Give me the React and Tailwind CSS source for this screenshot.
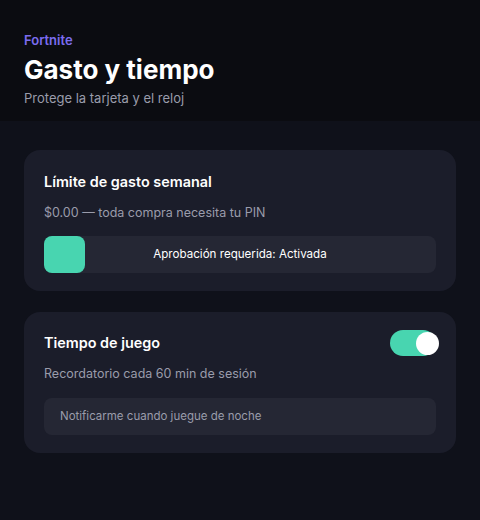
export default function App() {
  return (
    <div className="min-h-[520px] w-[480px] bg-[#0f111a] font-['Inter','Liberation_Sans',sans-serif]">
      <header className="bg-[#0b0c11] px-6 pt-[30px] pb-[13px]">
        <p className="text-[13px] leading-5 font-semibold text-[#7b6cf0]">Fortnite</p>
        <h1 className="mt-1 text-[26px] leading-8 font-bold text-white">Gasto y tiempo</h1>
        <p className="mt-0.5 text-[13px] leading-5 text-[#9a9cab]">Protege la tarjeta y el reloj</p>
      </header>

      <main className="flex flex-col gap-[21px] px-6 pt-[29px]">
        <section className="rounded-2xl bg-[#1b1d2a] px-5 pt-[21px] pb-[18px]">
          <h2 className="text-[14.4px] leading-[22px] font-semibold text-white">Límite de gasto semanal</h2>
          <p className="mt-[10px] text-[12.5px] leading-5 text-[#9a9cab]">$0.00 — toda compra necesita tu PIN</p>
          <div className="mt-[13px] flex h-[37px] items-center rounded-lg bg-[#252734]">
            <div className="h-[37px] w-[41px] shrink-0 rounded-lg bg-[#48d5b0]" />
            <span className="flex-1 pr-[41px] text-center text-[11.6px] text-white">Aprobación requerida: Activada</span>
          </div>
        </section>

        <section className="rounded-2xl bg-[#1b1d2a] px-5 pt-[18px] pb-[18px]">
          <div className="flex items-center justify-between">
            <h2 className="text-[14.4px] leading-[22px] font-semibold text-white">Tiempo de juego</h2>
            <div className="relative h-[26px] w-[46px] rounded-full bg-[#48d5b0]">
              <div className="absolute top-[2px] left-[26px] h-[23px] w-[23px] rounded-full bg-white" />
            </div>
          </div>
          <p className="mt-2 text-[12.5px] leading-5 text-[#9a9cab]">Recordatorio cada 60 min de sesión</p>
          <div className="mt-[14px] flex h-[37px] items-center rounded-lg bg-[#252734] px-4">
            <span className="text-[11.5px] text-[#9a9cab]">Notificarme cuando juegue de noche</span>
          </div>
        </section>
      </main>
    </div>
  )
}
